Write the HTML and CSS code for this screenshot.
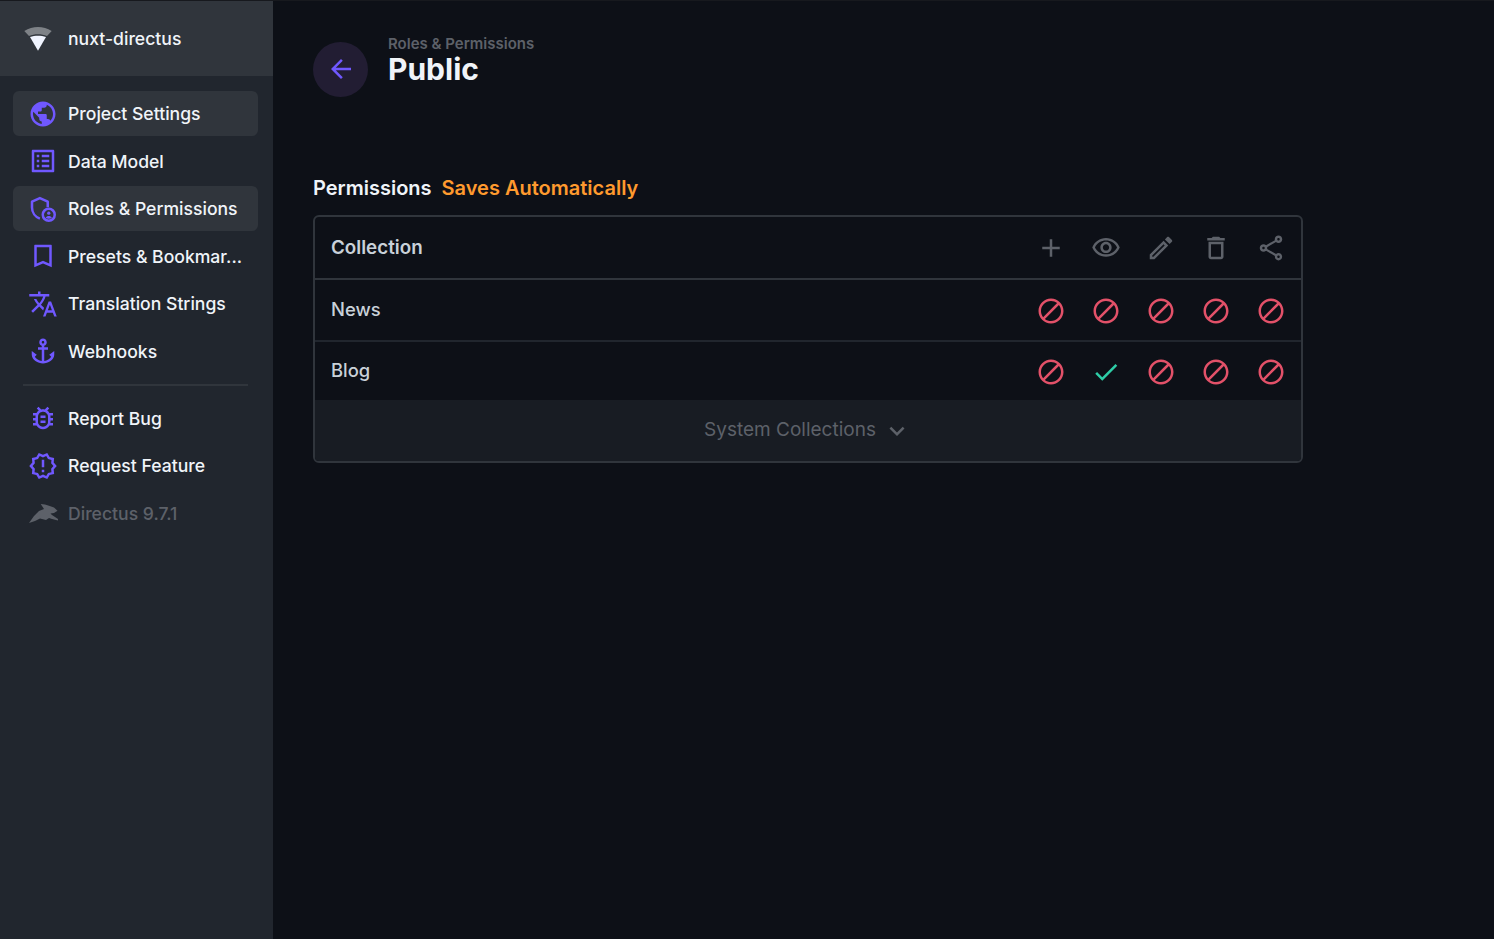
FILE: index.html
```html
<!DOCTYPE html>
<html lang="en">
<head>
  <meta charset="UTF-8" />
  <meta name="viewport" content="width=device-width, initial-scale=1.0"/>
  <title>Public - Roles &amp; Permissions</title>
  <link rel="stylesheet" href="styles.css">
</head>
<body>
  <svg class="icon-defs" xmlns="http://www.w3.org/2000/svg">
    <symbol id="i-public" viewBox="0 0 24 24"><path d="M12 2C6.48 2 2 6.48 2 12s4.48 10 10 10 10-4.48 10-10S17.52 2 12 2zm-1 17.93c-3.95-.49-7-3.85-7-7.93 0-.62.08-1.21.21-1.79L9 15v1c0 1.1.9 2 2 2v1.93zm6.9-2.54c-.26-.81-1-1.39-1.9-1.39h-1v-3c0-.55-.45-1-1-1H8v-2h2c.55 0 1-.45 1-1V7h2c1.1 0 2-.9 2-2v-.41c2.93 1.19 5 4.06 5 7.41 0 2.08-.8 3.97-2.1 5.39z"/></symbol>
    <symbol id="i-list" viewBox="0 0 24 24"><path d="M19 5v14H5V5h14m1.1-2H3.9c-.5 0-.9.4-.9.9v16.2c0 .4.4.9.9.9h16.2c.4 0 .9-.5.9-.9V3.9c0-.5-.5-.9-.9-.9zM11 7h6v2h-6V7zm0 4h6v2h-6v-2zm0 4h6v2h-6zM7 7h2v2H7zm0 4h2v2H7zm0 4h2v2H7z"/></symbol>
    <symbol id="i-admin" viewBox="0 0 24 24">
      <path d="M15.8 10.6V6.100L9.500 3.300 3.200 6.100v4.700c0 4 2.600 7.600 6.300 8.900" fill="none" stroke="currentColor" stroke-width="2" stroke-linejoin="round"/>
      <circle cx="16.6" cy="16.6" r="4.8" fill="none" stroke="currentColor" stroke-width="2"/>
      <circle cx="16.6" cy="15.3" r="1.3"/>
      <path d="M14.1 19c.5-1 1.5-1.4 2.5-1.4s2 .4 2.5 1.4c-.7.5-1.5.8-2.5.8s-1.8-.3-2.5-.8z"/>
    </symbol>
    <symbol id="i-bookmark" viewBox="0 0 24 24"><path d="M5.5 3h13c.3 0 .5.2.5.5V21l-7-3-7 3V3.500c0-.3.2-.5.5-.5zM7 5v13l5-2.180L17 18V5z" fill-rule="evenodd"/></symbol>
    <symbol id="i-translate" viewBox="0 0 24 24"><path d="M12.87 15.07l-2.54-2.51.03-.03c1.74-1.94 2.98-4.17 3.71-6.53H17V4h-7V2H8v2H1v1.99h11.17C11.5 7.92 10.44 9.75 9 11.35 8.07 10.32 7.3 9.19 6.69 8h-2c.73 1.63 1.73 3.17 2.98 4.56l-5.09 5.02L4 19l5-5 3.11 3.11.76-2.04zM18.5 10h-2L12 22h2l1.12-3h4.75L21 22h2l-4.5-12zm-2.62 7l1.62-4.33L19.12 17h-3.24z"/></symbol>
    <symbol id="i-anchor" viewBox="0 0 24 24"><path d="M17 15l1.55 1.55c-.96 1.69-3.33 3.04-5.55 3.37V11h3V9h-3V7.82C14.16 7.4 15 6.3 15 5c0-1.65-1.35-3-3-3S9 3.35 9 5c0 1.3.84 2.4 2 2.82V9H8v2h3v8.92c-2.22-.33-4.59-1.68-5.55-3.37L7 15l-4-3v3c0 3.88 4.92 7 9 7s9-3.12 9-7v-3l-4 3zM12 4c.55 0 1 .45 1 1s-.45 1-1 1-1-.45-1-1 .45-1 1-1z"/></symbol>
    <symbol id="i-bug" viewBox="0 0 24 24"><path d="M20 8h-2.81c-.45-.78-1.07-1.45-1.82-1.96L17 4.41 15.59 3l-2.17 2.17C12.96 5.06 12.49 5 12 5s-.96.06-1.41.17L8.41 3 7 4.41l1.62 1.63C7.88 6.55 7.26 7.22 6.81 8H4v2h2.09c-.05.33-.09.66-.09 1v1H4v2h2v1c0 .34.04.67.09 1H4v2h2.81c1.04 1.79 2.97 3 5.19 3s4.15-1.21 5.19-3H20v-2h-2.09c.05-.33.09-.66.09-1v-1h2v-2h-2v-1c0-.34-.04-.67-.09-1H20V8zm-4 4v3c0 .22-.03.47-.07.7l-.1.65-.37.65c-.72 1.24-2.04 2-3.46 2s-2.74-.77-3.46-2l-.37-.64-.1-.65C8.03 15.48 8 15.23 8 15v-4c0-.23.03-.48.07-.7l.1-.65.37-.65c.3-.52.72-.97 1.21-1.31l.57-.39.74-.18c.31-.08.63-.12.94-.12.32 0 .63.04.95.12l.68.16.61.42c.5.34.91.78 1.21 1.31l.38.65.1.65c.04.22.07.47.07.69v1zm-6 2h4v2h-4zm0-4h4v2h-4z"/></symbol>
    <symbol id="i-release" viewBox="0 0 24 24"><path d="M23 12l-2.44-2.78.34-3.68-3.61-.82-1.89-3.18L12 3 8.6 1.54 6.71 4.72l-3.61.81.34 3.68L1 12l2.44 2.78-.34 3.69 3.61.82 1.89 3.18L12 21l3.4 1.46 1.89-3.18 3.61-.82-.34-3.68L23 12zm-4.51 2.11l.26 2.79-2.74.62-1.43 2.41L12 18.82l-2.58 1.11-1.43-2.41-2.74-.62.26-2.8L3.66 12l1.85-2.12-.26-2.78 2.74-.61 1.43-2.41L12 5.18l2.58-1.11 1.43 2.41 2.74.62-.26 2.79L20.34 12l-1.85 2.11zM11 15h2v2h-2zm0-8h2v6h-2z"/></symbol>
    <symbol id="i-rabbit" viewBox="0 0 30 30"><path d="M1 25l5-7 5-5 5-2-3.300-5 4.300.5 4 1.200 5 1.800 3.500 3.200-3.500 2.300-3.500.5 1.500 1.500 6 4v1.500l-6-1.500-3-1-3 2-6-1.500-5 2.500z"/></symbol>
    <symbol id="i-back" viewBox="0 0 24 24"><path d="M20 11H7.83l5.59-5.59L12 4l-8 8 8 8 1.41-1.41L7.83 13H20v-2z"/></symbol>
    <symbol id="i-add" viewBox="0 0 24 24"><path d="M19 13h-6v6h-2v-6H5v-2h6V5h2v6h6v2z"/></symbol>
    <symbol id="i-eye" viewBox="0 0 24 24"><path d="M12 6c3.79 0 7.17 2.13 8.82 5.5C19.17 14.87 15.79 17 12 17s-7.17-2.13-8.82-5.5C4.83 8.13 8.21 6 12 6m0-2C7 4 2.73 7.11 1 11.5 2.73 15.89 7 19 12 19s9.27-3.11 11-7.5C21.27 7.11 17 4 12 4zm0 5c1.38 0 2.5 1.12 2.5 2.5S13.38 14 12 14s-2.5-1.12-2.5-2.5S10.62 9 12 9m0-2c-2.48 0-4.5 2.02-4.5 4.5S9.52 16 12 16s4.5-2.02 4.5-4.5S14.48 7 12 7z"/></symbol>
    <symbol id="i-edit" viewBox="0 0 24 24"><path d="M14.06 9.02l.92.92L5.92 19H5v-.92l9.06-9.06M17.66 3c-.25 0-.51.1-.7.29l-1.83 1.83 3.75 3.75 1.83-1.83c.39-.39.39-1.02 0-1.41l-2.34-2.34c-.2-.2-.45-.29-.71-.29zm-3.6 3.19L3 17.25V21h3.75L17.81 9.94l-3.75-3.75z"/></symbol>
    <symbol id="i-delete" viewBox="0 0 24 24"><path d="M6 19c0 1.1.9 2 2 2h8c1.1 0 2-.9 2-2V7H6v12zM8 9h8v10H8V9zm7.5-5l-1-1h-5l-1 1H5v2h14V4h-3.5z"/></symbol>
    <symbol id="i-share" viewBox="0 0 24 24"><path d="M18 16.08c-.76 0-1.44.3-1.96.77L8.91 12.7c.05-.23.09-.46.09-.7s-.04-.47-.09-.7l7.05-4.11c.54.5 1.25.81 2.04.81 1.66 0 3-1.34 3-3s-1.34-3-3-3-3 1.34-3 3c0 .24.04.47.09.7L8.04 9.81C7.5 9.31 6.79 9 6 9c-1.66 0-3 1.34-3 3s1.34 3 3 3c.79 0 1.5-.31 2.04-.81l7.12 4.16c-.05.21-.08.43-.08.65 0 1.61 1.31 2.92 2.92 2.92s2.92-1.31 2.92-2.92-1.31-2.92-2.92-2.92zM18 4c.55 0 1 .45 1 1s-.45 1-1 1-1-.45-1-1 .45-1 1-1zM6 13c-.55 0-1-.45-1-1s.45-1 1-1 1 .45 1 1-.45 1-1 1zm12 7.02c-.55 0-1-.45-1-1s.45-1 1-1 1 .45 1 1-.45 1-1 1z"/></symbol>
    <symbol id="i-block" viewBox="0 0 24 24"><path d="M12 2C6.48 2 2 6.48 2 12s4.48 10 10 10 10-4.48 10-10S17.52 2 12 2zM4 12c0-4.42 3.58-8 8-8 1.85 0 3.55.63 4.9 1.69L5.69 16.9C4.63 15.55 4 13.85 4 12zm8 8c-1.85 0-3.55-.63-4.9-1.69L18.31 7.1C19.37 8.45 20 10.15 20 12c0 4.42-3.58 8-8 8z"/></symbol>
    <symbol id="i-check" viewBox="0 0 24 24"><path d="M9 16.17L4.83 12l-1.41 1.41L9 19 21 7l-1.41-1.41z"/></symbol>
    <symbol id="i-expand" viewBox="0 0 24 24"><path d="M16.59 8.59L12 13.17 7.41 8.59 6 10l6 6 6-6z"/></symbol>
  </svg>

  <div class="app">
    <!-- Sidebar -->
    <aside class="sidebar">
      <div class="project">
        <svg class="project-logo" viewBox="0 0 30 26">
          <path class="logo-band" d="M.3 5C4.5 2.3 9.2 1 14 1s9.5 1.3 13.7 4L23 10c-2.800-1.100-5.800-1.700-9-1.700S7.800 8.900 5 10z"/>
          <path class="logo-fan" d="M6 11c2.500-.9 5.200-1.300 8-1.300s5.500.4 8 1.300l-8 13.700z"/>
        </svg>
        <span>nuxt-directus</span>
      </div>
      <nav class="nav">
        <a class="nav-item active"><svg class="icon"><use href="#i-public"/></svg><span>Project Settings</span></a>
        <a class="nav-item"><svg class="icon"><use href="#i-list"/></svg><span>Data Model</span></a>
        <a class="nav-item active"><svg class="icon"><use href="#i-admin"/></svg><span>Roles &amp; Permissions</span></a>
        <a class="nav-item"><svg class="icon"><use href="#i-bookmark"/></svg><span>Presets &amp; Bookmar...</span></a>
        <a class="nav-item"><svg class="icon"><use href="#i-translate"/></svg><span>Translation Strings</span></a>
        <a class="nav-item"><svg class="icon"><use href="#i-anchor"/></svg><span>Webhooks</span></a>
        <hr class="nav-divider">
        <a class="nav-item"><svg class="icon"><use href="#i-bug"/></svg><span>Report Bug</span></a>
        <a class="nav-item"><svg class="icon"><use href="#i-release"/></svg><span>Request Feature</span></a>
        <a class="nav-item version"><svg class="icon"><use href="#i-rabbit"/></svg><span>Directus 9.7.1</span></a>
      </nav>
    </aside>

    <!-- Main -->
    <main class="main">
      <header class="page-header">
        <button class="btn-back"><svg class="icon"><use href="#i-back"/></svg></button>
        <div class="page-title">
          <div class="breadcrumb">Roles &amp; Permissions</div>
          <h1>Public</h1>
        </div>
      </header>

      <div class="section-label">
        <span>Permissions</span>
        <span class="saves">Saves Automatically</span>
      </div>

      <div class="permissions">
        <div class="row row-head">
          <div class="row-name">Collection</div>
          <div class="row-actions">
            <svg class="icon"><use href="#i-add"/></svg>
            <svg class="icon"><use href="#i-eye"/></svg>
            <svg class="icon"><use href="#i-edit"/></svg>
            <svg class="icon"><use href="#i-delete"/></svg>
            <svg class="icon"><use href="#i-share"/></svg>
          </div>
        </div>
        <div class="row row-first">
          <div class="row-name">News</div>
          <div class="row-actions">
            <svg class="icon deny"><use href="#i-block"/></svg>
            <svg class="icon deny"><use href="#i-block"/></svg>
            <svg class="icon deny"><use href="#i-block"/></svg>
            <svg class="icon deny"><use href="#i-block"/></svg>
            <svg class="icon deny"><use href="#i-block"/></svg>
          </div>
        </div>
        <div class="row row-last">
          <div class="row-name">Blog</div>
          <div class="row-actions">
            <svg class="icon deny"><use href="#i-block"/></svg>
            <svg class="icon allow"><use href="#i-check"/></svg>
            <svg class="icon deny"><use href="#i-block"/></svg>
            <svg class="icon deny"><use href="#i-block"/></svg>
            <svg class="icon deny"><use href="#i-block"/></svg>
          </div>
        </div>
        <div class="system-toggle">
          <span>System Collections</span>
          <svg class="icon"><use href="#i-expand"/></svg>
        </div>
      </div>
    </main>
  </div>
</body>
</html>
```

FILE: styles.css
```css
* {
  box-sizing: border-box;
}
body {
  margin: 0;
  background: #0d1017;
  color: #f0f4f9;
  font-family: Inter, "Noto Sans", sans-serif;
}
.icon-defs {
  display: none;
}
.icon {
  width: 30px;
  height: 30px;
  flex: none;
  fill: currentColor;
}
.app {
  display: flex;
  height: 939px;
  border-top: 1px solid #17191e;
  overflow: hidden;
}

/* Sidebar */
.sidebar {
  width: 273px;
  flex: none;
  background: #21262e;
}
.project {
  display: flex;
  align-items: center;
  gap: 14px;
  height: 75px;
  padding-left: 24px;
  background: #30353c;
  font-size: 17.6px;
  font-weight: 500;
}
.project-logo {
  width: 30px;
  height: 26px;
  flex: none;
}
.logo-band {
  fill: #7e8287;
}
.logo-fan {
  fill: #f0f4ff;
}
.nav {
  display: flex;
  flex-direction: column;
  gap: 2.5px;
  padding: 15px 15px 0 13px;
}
.nav-item {
  display: flex;
  align-items: center;
  gap: 10px;
  height: 45px;
  padding: 0 15px;
  border-radius: 6px;
  font-size: 17.6px;
  font-weight: 500;
  color: #f0f4f9;
  white-space: nowrap;
}
.nav-item .icon {
  color: #7058ff;
}
.nav-item.active {
  background: #30353c;
}
.nav-divider {
  width: 225px;
  height: 2px;
  margin: 8px 0 7px 10px;
  border: 0;
  background: #30353c;
}
.nav-item.version,
.nav-item.version .icon {
  color: #5d6169;
}

/* Main */
.main {
  flex: 1;
  padding: 35px 40px 0;
}
.page-header {
  display: flex;
  align-items: flex-start;
  gap: 20px;
  height: 61px;
}
.btn-back {
  display: flex;
  align-items: center;
  justify-content: center;
  width: 55px;
  height: 55px;
  margin-top: 6px;
  padding: 0 0 2px;
  border: none;
  border-radius: 50%;
  background: #221d33;
  color: #7058ff;
}
.breadcrumb {
  font-size: 15px;
  font-weight: 600;
  line-height: 16px;
  color: #5d6169;
}
.page-title h1 {
  margin: 0;
  font-size: 30px;
  font-weight: 700;
  line-height: 34px;
}
.section-label {
  display: flex;
  gap: 10px;
  margin-top: 78px;
  font-size: 20px;
  font-weight: 600;
  line-height: 26px;
}
.saves {
  color: #ff9a2e;
}
.permissions {
  width: 990px;
  margin-top: 14px;
  border: 2px solid #30353c;
  border-radius: 6px;
  overflow: hidden;
}
.row {
  display: flex;
  align-items: center;
  justify-content: space-between;
  padding: 0 15px 0 16px;
  font-size: 18.4px;
  font-weight: 500;
  color: #c9d1d9;
}
.row-head {
  height: 63px;
  border-bottom: 2px solid #30353c;
  font-size: 18.8px;
  font-weight: 600;
}
.row-first {
  height: 62px;
  border-bottom: 2px solid #21262e;
}
.row-last {
  height: 58px;
}
.row-actions {
  display: flex;
  gap: 25px;
  color: #5d6169;
}
.row-first .row-actions,
.row-last .row-actions {
  margin-top: 2px;
}
.row-first .row-name,
.row-last .row-name {
  margin-bottom: 2px;
}
.row-actions .deny {
  color: #e35169;
}
.row-actions .allow {
  color: #2ecda7;
}
.system-toggle {
  display: flex;
  align-items: center;
  justify-content: center;
  gap: 6px;
  height: 61px;
  background: #181c23;
  font-size: 19px;
  color: #5d6169;
}
.system-toggle span {
  margin-bottom: 2px;
}
```
